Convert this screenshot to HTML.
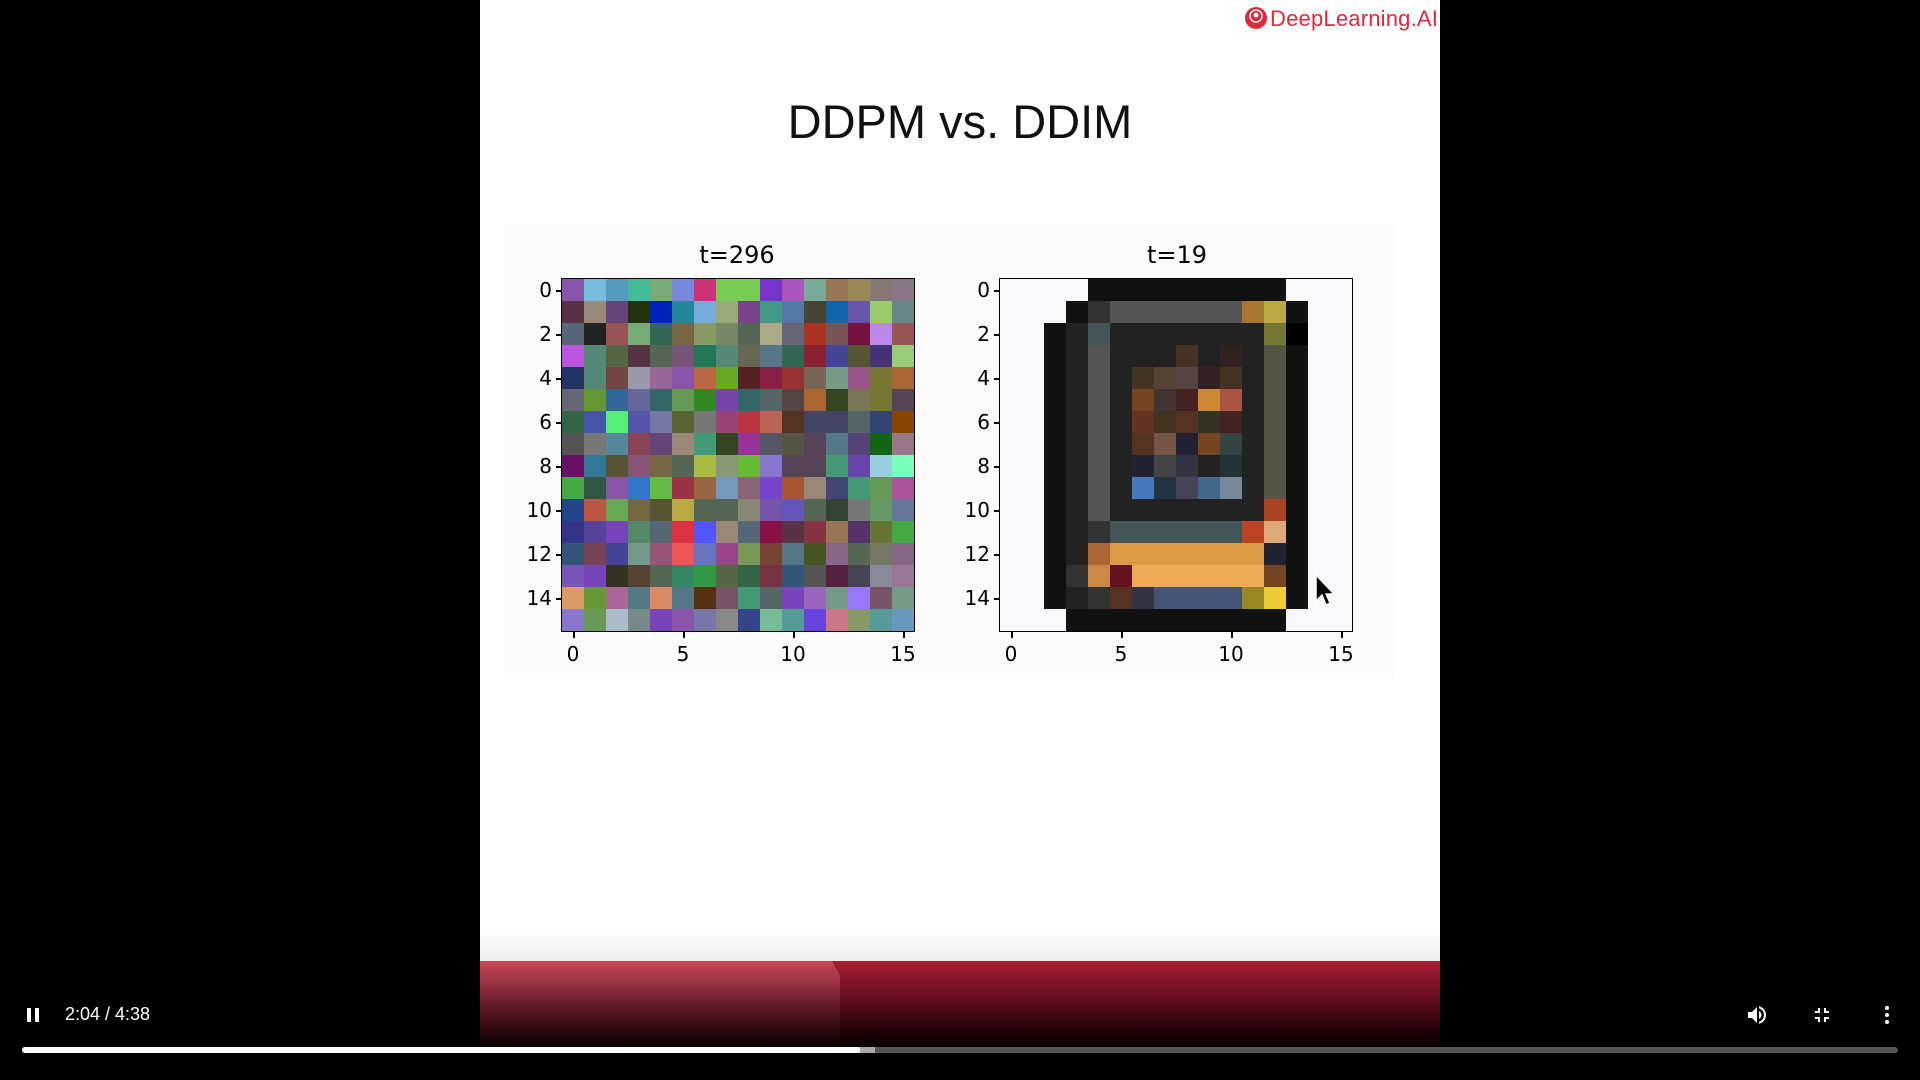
<!DOCTYPE html>
<html><head><meta charset="utf-8"><style>
body{margin:0;width:1920px;height:1080px;background:#000;position:relative;overflow:hidden;font-family:"DejaVu Sans",sans-serif}
#slide{position:absolute;left:480px;top:0;width:960px;height:1047px;background:#fff}
#band{position:absolute;left:480px;top:961px;width:960px;height:86px;background:linear-gradient(180deg,#a81d33 0%,#6a0f1e 40%,#1a0207 85%,#0a0003 100%)}
#band2{position:absolute;left:480px;top:961px;width:360px;height:86px;background:linear-gradient(180deg,rgba(220,110,120,.55) 0%,rgba(120,60,70,.3) 50%,rgba(0,0,0,0) 100%);clip-path:polygon(0 0,352px 0,400px 86px,0 86px)}
#fade{position:absolute;left:480px;top:930px;width:960px;height:31px;background:linear-gradient(#fff,#ececec)}
.t{position:absolute;color:#000;font-size:20px;line-height:20px}
.grid{position:absolute;width:352px;height:352px;border:1.5px solid #000;display:grid;grid-template-columns:repeat(16,22px);grid-template-rows:repeat(16,22px)}
.tk{position:absolute;background:#000}
#logo{position:absolute;left:1270px;top:6px;font-family:"Liberation Sans",sans-serif;font-size:22px;color:#e0283c;letter-spacing:0.2px}
#title{position:absolute;left:480px;width:960px;top:94px;text-align:center;font-family:"Liberation Sans",sans-serif;font-size:47px;color:#111}
.ctl{position:absolute;color:#fff;font-family:"Liberation Sans",sans-serif;font-size:18px}
</style></head><body>
<div id="slide"></div>
<div style="position:absolute;left:505px;top:224px;width:890px;height:452px;background:#fbfbfb"></div>
<div id="fade"></div>
<div id="band"></div><div id="band2"></div>
<svg style="position:absolute;left:1244px;top:6px" width="24" height="24" viewBox="0 0 24 24"><circle cx="12" cy="12" r="11" fill="#e0283c"/><circle cx="12" cy="10" r="6" fill="none" stroke="#fff" stroke-width="1.5"/><circle cx="12" cy="9" r="2.5" fill="#fff"/></svg>
<div id="logo">DeepLearning.AI</div>
<div id="title">DDPM vs. DDIM</div>
<div class="t" style="left:690px;top:245px;font-size:24px;width:94px;text-align:center">t=296</div>
<div class="t" style="left:1130px;top:245px;font-size:24px;width:94px;text-align:center">t=19</div>
<div id="g1" class="grid" style="left:561px;top:278px"></div>
<div id="g2" class="grid" style="left:999px;top:278px;background:#f8f8fa"></div>
<div id="ticks"></div>
<svg style="position:absolute;left:1314px;top:573px" width="24" height="36" viewBox="0 0 24 36"><path d="M2 2 L2 28 L8 22 L12 32 L16 30 L12 21 L20 21 Z" fill="#000" stroke="#fff" stroke-width="1.5"/></svg>
<svg style="position:absolute;left:25px;top:1006px" width="16" height="18"><rect x="2" y="2" width="4" height="14" fill="#fff"/><rect x="10" y="2" width="4" height="14" fill="#fff"/></svg>
<div class="ctl" style="left:65px;top:1004px">2:04 / 4:38</div>
<svg style="position:absolute;left:1745px;top:1003px" width="24" height="24" viewBox="0 0 24 24"><path d="M3 9v6h4l5 5V4L7 9H3zm13.5 3c0-1.8-1-3.3-2.5-4v8c1.5-.7 2.5-2.2 2.5-4zM14 3.2v2.1c2.9.9 5 3.5 5 6.7s-2.1 5.8-5 6.7v2.1c4-.9 7-4.5 7-8.8s-3-7.9-7-8.8z" fill="#fff"/></svg>
<svg style="position:absolute;left:1810px;top:1003px" width="24" height="24" viewBox="0 0 24 24"><path d="M5 16h3v3h2v-5H5v2zm3-8H5v2h5V5H8v3zm6 11h2v-3h3v-2h-5v5zm2-11V5h-2v5h5V8h-3z" fill="#fff"/></svg>
<svg style="position:absolute;left:1875px;top:1003px" width="24" height="24" viewBox="0 0 24 24"><circle cx="12" cy="5" r="2" fill="#fff"/><circle cx="12" cy="12" r="2" fill="#fff"/><circle cx="12" cy="19" r="2" fill="#fff"/></svg>
<div style="position:absolute;left:22px;top:1047px;width:1876px;height:6px;border-radius:3px;background:#555"></div>
<div style="position:absolute;left:22px;top:1047px;width:839px;height:6px;border-radius:3px;background:#fff"></div>
<div style="position:absolute;left:860px;top:1047px;width:15px;height:6px;background:#aaa"></div>
<script>
var L="85a 7bd 59b 4b9 7a7 78d c37 7c5 7c5 73c a5b 7a9 975 985 877 878 534 987 647 231 02b 289 7ad 9a7 748 498 57a 443 16a 65a 9c6 688 567 222 955 7a7 365 764 896 786 565 aa8 667 a32 755 714 b8e 955 b5d 587 564 534 565 757 275 587 665 578 365 823 449 553 437 9c7 236 587 744 99a 969 85a b64 6a2 522 824 933 765 798 958 773 a63 667 693 369 669 366 695 382 74a 366 566 544 a63 342 775 773 545 364 45a 5e7 55a 77a 563 777 947 b34 b65 532 446 446 566 347 840 555 777 589 845 647 987 497 342 939 556 554 545 578 547 161 978 616 379 553 857 764 565 ab4 897 6b3 87c 545 545 497 64a 9cd 7fb 4a4 354 85a 37c 6b4 934 964 79b 867 74c a53 987 447 497 695 a59 248 b54 6a5 764 553 ba4 565 565 887 75a 65b 565 343 777 696 679 338 549 74b 586 567 d34 55f 987 567 814 534 834 975 536 673 4a4 357 745 449 798 957 e55 67b 948 795 743 578 452 868 565 776 868 75b 74b 332 543 565 386 394 564 364 734 357 555 524 445 889 979 d96 693 a69 578 d86 578 531 756 497 566 74b 96b 798 97f 756 798 87c 695 abc 788 74b 85a 77a 888 348 7b9 599 64d c78 896 599 69b".split(" ");
var g1=document.getElementById('g1');L.forEach(function(c){var d=document.createElement('div');d.style.background='#'+c;g1.appendChild(d)});
var W='f8f8fa',R=[];for(var i=0;i<16;i++){R.push([]);for(var j=0;j<16;j++)R[i].push(W);}
function s(r,a,b,c){for(var j=a;j<=b;j++)R[r][j]=c;}
s(0,4,12,'111');s(1,3,3,'111');s(1,4,4,'333');s(1,5,10,'555');s(1,11,11,'a73');s(1,12,12,'ba4');s(1,13,13,'111');
s(2,2,2,'111');s(2,3,3,'222');s(2,4,4,'455');s(2,5,11,'222');s(2,12,12,'773');s(2,13,13,'000');
var inn=[["222","222","432","222","322"],["432","543","544","322","432"],["742","433","422","c83","a54"],["632","432","532","332","422"],["532","754","223","742","344"],["223","444","334","222","233"],["47b","234","445","468","789"]];
for(var r=3;r<=10;r++){s(r,2,2,'111');s(r,3,3,'222');s(r,4,4,'555');s(r,5,11,'222');s(r,12,12,'554');s(r,13,13,'111');if(r<=9)for(var k=0;k<5;k++)R[r][6+k]=inn[r-3][k];}
s(10,12,12,'a42');
s(11,2,2,'111');s(11,3,3,'222');s(11,4,4,'333');s(11,5,10,'455');s(11,11,11,'b42');s(11,12,12,'da7');s(11,13,13,'111');
s(12,2,2,'111');s(12,3,3,'222');s(12,4,4,'a63');s(12,5,11,'d94');s(12,12,12,'223');s(12,13,13,'111');
s(13,2,2,'111');s(13,3,3,'333');s(13,4,4,'c84');s(13,5,5,'612');s(13,6,11,'ea5');s(13,12,12,'742');s(13,13,13,'111');
s(14,2,2,'111');s(14,3,3,'222');s(14,4,4,'333');s(14,5,5,'532');s(14,6,6,'334');s(14,7,10,'457');s(14,11,11,'982');s(14,12,12,'ec3');s(14,13,13,'111');
s(15,3,12,'111');
var g2=document.getElementById('g2');R.forEach(function(row){row.forEach(function(c){var d=document.createElement('div');d.style.background='#'+c;g2.appendChild(d)})});
var T=document.getElementById('ticks'),h='';
[562,1000].forEach(function(x0){
for(var r=0;r<16;r+=2){var y=279+11+22*r;h+='<div class="tk" style="left:'+(x0-6)+'px;top:'+y+'px;width:6px;height:1.5px"></div><div class="t" style="left:'+(x0-50)+'px;top:'+(y-10)+'px;width:40px;text-align:right">'+r+'</div>';}
[0,5,10,15].forEach(function(c){var x=x0+11+22*c;h+='<div class="tk" style="left:'+x+'px;top:632px;width:1.5px;height:6px"></div><div class="t" style="left:'+(x-20)+'px;top:644px;width:40px;text-align:center">'+c+'</div>';});
});
T.innerHTML=h;
</script>
</body></html>
